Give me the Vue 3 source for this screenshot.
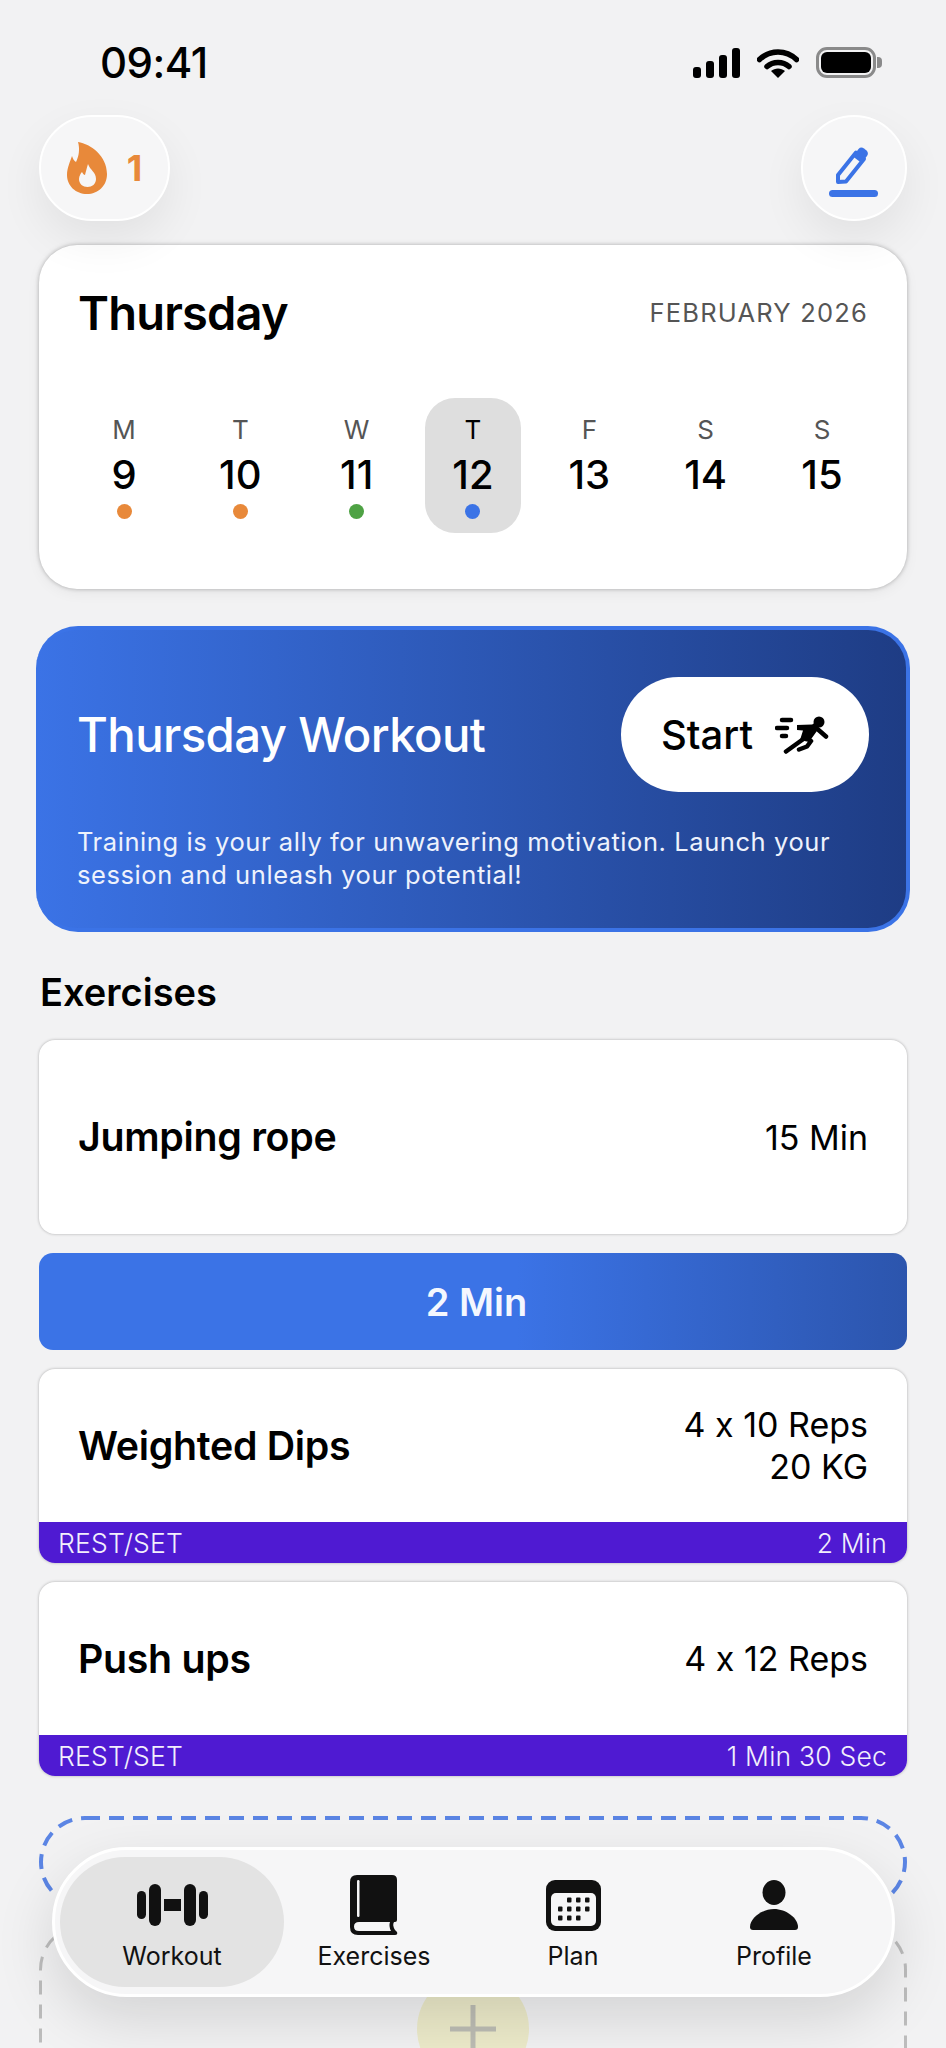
<script setup>
const days = [
  { letter: 'M', num: 9, dot: 'orange' },
  { letter: 'T', num: 10, dot: 'orange' },
  { letter: 'W', num: 11, dot: 'green' },
  { letter: 'T', num: 12, dot: 'blue', active: true },
  { letter: 'F', num: 13 },
  { letter: 'S', num: 14 },
  { letter: 'S', num: 15 },
]

const calendarDots = [
  [23, 20], [32, 20], [41, 20],
  [14, 29], [23, 29], [32, 29], [41, 29],
  [14, 38], [23, 38], [32, 38],
]
</script>

<template>
  <div class="page">
    <div class="status">
      <span class="time">09:41</span>
      <div class="status-icons">
        <svg class="signal" width="47" height="30" viewBox="0 0 47 30">
          <rect x="0" y="19" width="8" height="11" rx="3" />
          <rect x="13" y="13" width="8" height="17" rx="3" />
          <rect x="26" y="7" width="8" height="23" rx="3" />
          <rect x="39" y="0" width="8" height="30" rx="3" />
        </svg>
        <svg class="wifi" width="42" height="30" viewBox="0 0 42 30">
          <path d="M2.5 11.5C13 1.5 29 1.500 39.500 11.500" fill="none" stroke="#000" stroke-width="5.500" stroke-linecap="round" />
          <path d="M10 18.500C16 13 26 13 32 18.500" fill="none" stroke="#000" stroke-width="5.500" stroke-linecap="round" />
          <path d="M21 30L14 23C18 19.500 24 19.500 28 23Z" />
        </svg>
        <div class="battery">
          <div class="battery-body"><div class="battery-fill"></div></div>
          <div class="battery-nub"></div>
        </div>
      </div>
    </div>

    <div class="top-row">
      <button class="glass-btn streak">
        <svg width="40" height="52" viewBox="0 0 40 52">
          <path fill="#e8893a" d="M11 0C24 2 40 14 40 32C40 44 31 52 20 52C9 52 0 44 0 33C0 26 3 20 5 14C6 17 7 19 9 20C12 14 13 7 11 0Z" />
          <path fill="#f6f6f7" d="M21 22C23 28 29 30 29 37C29 42 25 45 20.500 45C16 45 12 42 12 37C12 34 14 31 15 30C16 32 17 33 18 33C19 29 20 25 21 22Z" />
        </svg>
        <span>1</span>
      </button>
      <button class="glass-btn edit">
        <svg width="50" height="52" viewBox="0 0 50 52">
          <path d="M9 29L27 6.500L35 13L17 35.500L9 36Z" fill="none" stroke="#3b73e6" stroke-width="4" stroke-linejoin="round" />
          <path d="M24 10.500L29.500 3Q32 0.500 35 2.500L37.500 4.500Q40 7 38 10L32.500 17Z" fill="#3b73e6" />
          <rect x="0" y="44" width="49" height="7" rx="3.500" fill="#3b73e6" />
        </svg>
      </button>
    </div>

    <section class="calendar">
      <div class="calendar-head">
        <h1>Thursday</h1>
        <span class="month">FEBRUARY 2026</span>
      </div>
      <div class="week">
        <div v-for="day in days" :key="day.num" class="day" :class="{ active: day.active }">
          <span class="day-letter">{{ day.letter }}</span>
          <span class="day-num">{{ day.num }}</span>
          <span class="dot" :class="day.dot"></span>
        </div>
      </div>
    </section>

    <section class="hero">
      <div class="hero-top">
        <h2>Thursday Workout</h2>
        <button class="start">
          Start
          <svg width="54" height="38" viewBox="0 0 54 38">
            <circle cx="44" cy="6" r="5.500" />
            <path d="M22 9L37 8.500L43 13.500L34 26L25 24L28 14.500L22 14Z" />
            <path d="M39 10L51 20.500" fill="none" stroke="#000" stroke-width="4.500" stroke-linecap="round" />
            <path d="M27 24L11 35.500M36 25L32 30.500L24 33.500" fill="none" stroke="#000" stroke-width="4.500" stroke-linecap="round" stroke-linejoin="round" />
            <path d="M7 4H16M2 12H12M7 20H11" fill="none" stroke="#000" stroke-width="4.500" stroke-linecap="round" />
          </svg>
        </button>
      </div>
      <p>Training is your ally for unwavering motivation. Launch your session and unleash your potential!</p>
    </section>

    <h3 class="section-title">Exercises</h3>

    <div class="list">
      <article class="exercise">
        <div class="exercise-main">
          <span class="name">Jumping rope</span>
          <span class="amount">15 Min</span>
        </div>
      </article>

      <div class="rest-bar">2 Min</div>

      <article class="exercise">
        <div class="exercise-main">
          <span class="name">Weighted Dips</span>
          <span class="amount">4 x 10 Reps<br />20 KG</span>
        </div>
        <div class="rest-row"><span>REST/SET</span><span>2 Min</span></div>
      </article>

      <article class="exercise">
        <div class="exercise-main">
          <span class="name">Push ups</span>
          <span class="amount">4 x 12 Reps</span>
        </div>
        <div class="rest-row"><span>REST/SET</span><span>1 Min 30 Sec</span></div>
      </article>
    </div>

    <div class="add-rest">
      <svg class="dash" width="868" height="92" viewBox="0 0 868 92">
        <rect x="2" y="2" width="864" height="88" rx="44" fill="none" stroke="#5b85e4" stroke-width="4" stroke-dasharray="15 9" />
      </svg>
    </div>

    <div class="add-exercise">
      <svg class="dash" width="868" height="200" viewBox="0 0 868 200">
        <rect x="1.500" y="1.500" width="865" height="300" rx="44" fill="none" stroke="#bcbcbc" stroke-width="3" stroke-dasharray="14 10" />
      </svg>
      <div class="plus-circle">
        <svg width="48" height="48" viewBox="0 0 48 48">
          <path d="M24 0V48M1 24H47" stroke="#bdbdb4" stroke-width="5" />
        </svg>
      </div>
    </div>

    <nav class="tabbar">
      <div class="tab active">
        <div class="tab-icon">
          <svg width="71" height="42" viewBox="0 0 71 42">
            <rect x="0" y="7" width="9" height="28" rx="4.500" fill="#111" />
            <rect x="12" y="0" width="12" height="42" rx="6" fill="#111" />
            <rect x="27" y="15" width="17" height="12" fill="#111" />
            <rect x="47" y="0" width="12" height="42" rx="6" fill="#111" />
            <rect x="62" y="7" width="9" height="28" rx="4.500" fill="#111" />
          </svg>
        </div>
        <span>Workout</span>
      </div>
      <div class="tab">
        <div class="tab-icon">
          <svg width="48" height="60" viewBox="0 0 48 60">
            <path d="M7 0H42Q47 0 47 5V45Q47 47 45 47H44Q42 50 45 55L47 57Q48 60 45 60H8Q0 60 0 52V7Q0 0 7 0Z" fill="#111" />
            <rect x="7" y="5" width="2.500" height="37" rx="1.200" fill="#f6f6f7" />
            <path d="M9 47H40Q38.500 51 41 56H9Q4 56 4 51.500Q4 47 9 47Z" fill="#f6f6f7" />
          </svg>
        </div>
        <span>Exercises</span>
      </div>
      <div class="tab">
        <div class="tab-icon">
          <svg width="55" height="51" viewBox="0 0 55 51">
            <rect x="0" y="0" width="55" height="51" rx="9" fill="#111" />
            <rect x="5" y="13" width="45" height="33" rx="5" fill="#f6f6f7" />
            <rect v-for="d in calendarDots" :key="d.join()" :x="d[0] - 2" :y="d[1] - 2.500" width="4.500" height="5" rx="1" fill="#111" />
          </svg>
        </div>
        <span>Plan</span>
      </div>
      <div class="tab">
        <div class="tab-icon">
          <svg width="48" height="50" viewBox="0 0 48 50">
            <ellipse cx="24" cy="12.500" rx="11.500" ry="12.500" fill="#111" />
            <path d="M24 29C36 29 48 38 48 47Q48 50 45 50H3Q0 50 0 47C0 38 12 29 24 29Z" fill="#111" />
          </svg>
        </div>
        <span>Profile</span>
      </div>
    </nav>
  </div>
</template>

<style scoped>
.page {
  position: relative;
  width: 946px;
  height: 2048px;
  overflow: hidden;
  box-sizing: border-box;
  padding: 0 39px;
  background: #f2f2f3;
  font-family: Inter, "Noto Sans", sans-serif;
  font-feature-settings: "calt" 0;
  color: #000;
}

.status {
  height: 115px;
  display: flex;
  justify-content: space-between;
  align-items: flex-start;
  padding: 41px 25px 0 61px;
  box-sizing: border-box;
}

.time {
  font-size: 42px;
  line-height: 44px;
  font-weight: 500;
  letter-spacing: -0.5px;
}

.status-icons {
  display: flex;
  align-items: center;
  gap: 17px;
  padding-top: 6px;
}

.battery {
  display: flex;
  align-items: center;
  gap: 1px;
}

.battery-body {
  width: 60px;
  height: 31px;
  box-sizing: border-box;
  border: 3px solid #8a8a8a;
  border-radius: 11px;
  padding: 2px;
}

.battery-fill {
  width: 100%;
  height: 100%;
  background: #000;
  border-radius: 6px;
}

.battery-nub {
  width: 5px;
  height: 11px;
  background: #8a8a8a;
  border-radius: 0 4px 4px 0;
}

.top-row {
  position: relative;
  z-index: 2;
  display: flex;
  justify-content: space-between;
  height: 106px;
  margin-bottom: 24px;
}

.glass-btn {
  display: flex;
  align-items: center;
  justify-content: center;
  box-sizing: border-box;
  height: 106px;
  padding: 0;
  background: #f6f6f7;
  border: 2px solid #fff;
  border-radius: 53px;
  box-shadow: 0 18px 46px rgba(0, 0, 0, 0.07);
  font-family: inherit;
}

.streak {
  width: 131px;
  gap: 20px;
  color: #e8893a;
  font-size: 36px;
  font-weight: 700;
}

.edit {
  width: 106px;
  padding-top: 8px;
}

.calendar {
  height: 344px;
  box-sizing: border-box;
  padding: 42px 39px 0;
  background: #fff;
  border-radius: 38px;
  box-shadow: 0 0 4px rgba(0, 0, 0, 0.28), 0 4px 14px rgba(0, 0, 0, 0.05);
}

.calendar-head {
  display: flex;
  justify-content: space-between;
  align-items: center;
  height: 50px;
}

h1 {
  margin: 0;
  font-size: 47px;
  font-weight: 600;
  letter-spacing: -0.8px;
}

.month {
  font-size: 25.500px;
  color: #555;
  letter-spacing: 1.2px;
}

.week {
  display: grid;
  grid-template-columns: repeat(7, 96px);
  justify-content: space-between;
  margin: 61px -2px 0;
}

.day {
  height: 135px;
  box-sizing: border-box;
  padding-top: 19px;
  display: flex;
  flex-direction: column;
  align-items: center;
  border-radius: 30px;
}

.day.active {
  background: #dedede;
}

.day-letter {
  font-size: 26px;
  line-height: 26px;
  color: #555;
}

.active .day-letter {
  color: #000;
}

.day-num {
  margin-top: 10px;
  font-size: 40px;
  line-height: 44px;
  font-weight: 500;
}

.dot {
  width: 15px;
  height: 15px;
  margin-top: 7px;
  border-radius: 50%;
}

.orange {
  background: #e8893a;
}

.green {
  background: #4ea244;
}

.blue {
  background: #3b73e6;
}

.hero {
  height: 306px;
  box-sizing: border-box;
  margin: 37px -3px 0;
  padding: 47px 37px 0 41px;
  border: 4px solid #3b73e6;
  border-left: none;
  border-radius: 42px;
  background: linear-gradient(90deg, #3b73e6, #1e3c84);
  background-origin: border-box;
  color: #fff;
}

.hero-top {
  display: flex;
  justify-content: space-between;
  align-items: center;
}

h2 {
  margin: 0;
  font-size: 47.300px;
  font-weight: 500;
  letter-spacing: -0.6px;
}

.start {
  display: flex;
  align-items: center;
  justify-content: center;
  gap: 22px;
  width: 248px;
  height: 115px;
  padding: 0;
  border: none;
  border-radius: 58px;
  background: #fff;
  font-family: inherit;
  font-size: 40px;
  font-weight: 500;
  color: #000;
}

.hero p {
  margin: 33px 0 0;
  font-size: 25.500px;
  line-height: 33px;
  letter-spacing: 0.58px;
  font-weight: 400;
  color: #eef2fc;
}

.section-title {
  margin: 37px 0 0 1px;
  height: 46px;
  font-size: 38px;
  line-height: 46px;
  font-weight: 600;
}

.list {
  display: flex;
  flex-direction: column;
  gap: 19px;
  margin-top: 25px;
}

.exercise {
  height: 194px;
  display: flex;
  flex-direction: column;
  overflow: hidden;
  background: #fff;
  border-radius: 16px;
  box-shadow: 0 0 3px rgba(0, 0, 0, 0.3);
}

.exercise-main {
  flex: 1;
  display: flex;
  justify-content: space-between;
  align-items: center;
  padding: 0 39px 1px;
}

.name {
  font-size: 39.300px;
  font-weight: 600;
  letter-spacing: -0.3px;
}

.amount {
  padding-top: 2px;
  font-size: 34px;
  line-height: 42px;
  text-align: right;
}

.rest-row {
  height: 41px;
  display: flex;
  justify-content: space-between;
  align-items: center;
  padding: 0 20px 0 19px;
  background: #4f1ad2;
  color: #f2effc;
  font-size: 26.500px;
  font-weight: 300;
  letter-spacing: 0.2px;
}

.rest-bar {
  height: 97px;
  display: flex;
  align-items: center;
  justify-content: center;
  padding-left: 7px;
  border-radius: 14px;
  background: linear-gradient(90deg, #3b73e6 55%, #2c55ad);
  color: #f4f7fe;
  font-size: 38px;
  font-weight: 600;
}

.add-rest {
  height: 92px;
  margin-top: 40px;
}

.add-exercise {
  position: relative;
  height: 200px;
  margin-top: 16px;
  padding-top: 49px;
  box-sizing: border-box;
  display: flex;
  justify-content: center;
}

.dash {
  display: block;
}

.add-exercise .dash {
  position: absolute;
  left: 0;
  top: 0;
}

.plus-circle {
  flex: none;
  width: 112px;
  height: 112px;
  display: flex;
  align-items: center;
  justify-content: center;
  border-radius: 50%;
  background: #edebca;
}

.tabbar {
  position: absolute;
  left: 52px;
  top: 1847px;
  width: 843px;
  height: 150px;
  box-sizing: border-box;
  padding: 7px 5px;
  display: grid;
  grid-template-columns: 224px 180px 218px 184px;
  background: #f6f6f7;
  border: 3px solid #fff;
  border-radius: 75px;
  box-shadow: 0 22px 60px rgba(0, 0, 0, 0.13);
}

.tab {
  display: flex;
  flex-direction: column;
  align-items: center;
  gap: 6px;
  padding-top: 18px;
  box-sizing: border-box;
  font-size: 25px;
  line-height: 30px;
  color: #111;
}

.tab.active {
  background: #e3e3e3;
  border-radius: 65px;
}

.tab-icon {
  height: 60px;
  display: flex;
  align-items: center;
}

.tab svg {
  display: block;
}
</style>

<style>
html,
body {
  margin: 0;
  background: #f2f2f3;
}
</style>
